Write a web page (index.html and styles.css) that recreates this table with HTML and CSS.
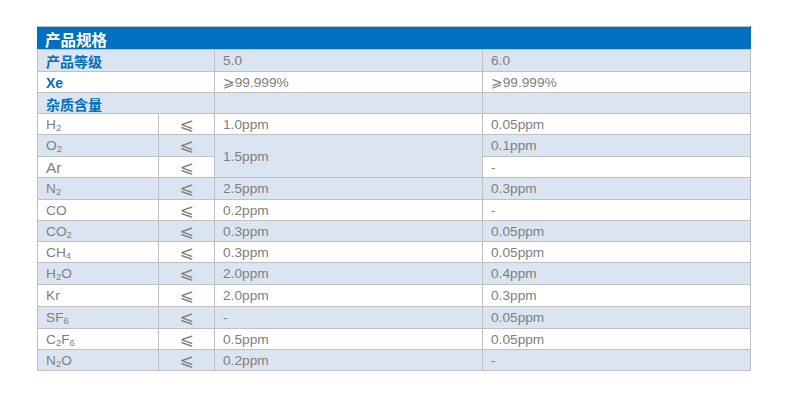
FILE: index.html
```html
<!DOCTYPE html>
<html lang="zh">
<head>
<meta charset="utf-8">
<link rel="stylesheet" href="styles.css">
</head>
<body>
<div class="wrap">
<table class="spec">
  <colgroup>
    <col class="c1"><col class="c2"><col class="c3"><col class="c4">
  </colgroup>
  <tr class="title"><td colspan="4">产品规格</td></tr>
  <tr class="blue h22"><td colspan="2" class="lab">产品等级</td><td>5.0</td><td>6.0</td></tr>
  <tr class="h21"><td colspan="2" class="lab en">Xe</td><td><span class="ge">⩾</span>99.999%</td><td><span class="ge">⩾</span>99.999%</td></tr>
  <tr class="blue h21"><td colspan="2" class="lab">杂质含量</td><td></td><td></td></tr>
  <tr class="h21"><td>H<sub>2</sub></td><td class="le"><span>⩽</span></td><td>1.0ppm</td><td>0.05ppm</td></tr>
  <tr class="blue h22"><td>O<sub>2</sub></td><td class="le"><span>⩽</span></td><td rowspan="2">1.5ppm</td><td>0.1ppm</td></tr>
  <tr class="h21"><td class="big">Ar</td><td class="le"><span>⩽</span></td><td>-</td></tr>
  <tr class="blue h22"><td>N<sub>2</sub></td><td class="le"><span>⩽</span></td><td>2.5ppm</td><td>0.3ppm</td></tr>
  <tr class="h21"><td>CO</td><td class="le"><span>⩽</span></td><td>0.2ppm</td><td>-</td></tr>
  <tr class="blue h21"><td>CO<sub>2</sub></td><td class="le"><span>⩽</span></td><td>0.3ppm</td><td>0.05ppm</td></tr>
  <tr class="h21"><td>CH<sub>4</sub></td><td class="le"><span>⩽</span></td><td>0.3ppm</td><td>0.05ppm</td></tr>
  <tr class="blue h22"><td>H<sub>2</sub>O</td><td class="le"><span>⩽</span></td><td>2.0ppm</td><td>0.4ppm</td></tr>
  <tr class="h22"><td>Kr</td><td class="le"><span>⩽</span></td><td>2.0ppm</td><td>0.3ppm</td></tr>
  <tr class="blue h22"><td>SF<sub>6</sub></td><td class="le"><span>⩽</span></td><td>-</td><td>0.05ppm</td></tr>
  <tr class="h21"><td>C<sub>2</sub>F<sub>6</sub></td><td class="le"><span>⩽</span></td><td>0.5ppm</td><td>0.05ppm</td></tr>
  <tr class="blue h21"><td>N<sub>2</sub>O</td><td class="le"><span>⩽</span></td><td>0.2ppm</td><td>-</td></tr>
</table>
</div>
</body>
</html>
```
FILE: styles.css
```css
html, body {
  margin: 0;
  padding: 0;
  background: #fff;
}
.wrap {
  padding: 26px 0 0 37px;
}
.spec {
  border-collapse: collapse;
  table-layout: fixed;
  width: 713px;
  font-family: "Liberation Sans", Arial, "Noto Sans CJK SC", sans-serif;
  font-size: 13.7px;
  color: #808080;
}
.c1 { width: 121px; }
.c2 { width: 56px; }
.c3 { width: 268px; }
.c4 { width: 268px; }
.spec td {
  border: 1px solid #c0c0c0;
  padding: 1px 0 0 8px;
  line-height: 16px;
  vertical-align: middle;
  white-space: nowrap;
}
.title td {
  height: 21px;
  background: #0070c0;
  color: #fff;
  font-family: "Noto Sans CJK SC", sans-serif;
  font-weight: 700;
  font-size: 15.5px;
  padding-left: 7px;
  border-left-color: #0070c0;
  border-right-color: #0070c0;
}
.blue td { background: #dbe5f1; }
.h21 td { height: 19px; }
.h22 td { height: 20px; }
.lab {
  color: #0070c0;
  font-family: "Noto Sans CJK SC", sans-serif;
  font-weight: 700;
  font-size: 14px;
}
.lab.en {
  font-family: "Liberation Sans", Arial, sans-serif;
}
.le {
  text-align: center;
  padding-left: 0 !important;
  font-family: "DejaVu Sans", sans-serif;
  font-size: 17px;
}
.le span {
  vertical-align: 2px;
}
.ge {
  font-family: "DejaVu Sans", sans-serif;
  font-size: 14px;
}
.big { font-size: 15.5px; }
sub {
  font-size: 9.5px;
  vertical-align: -2px;
  line-height: 0;
}
```
